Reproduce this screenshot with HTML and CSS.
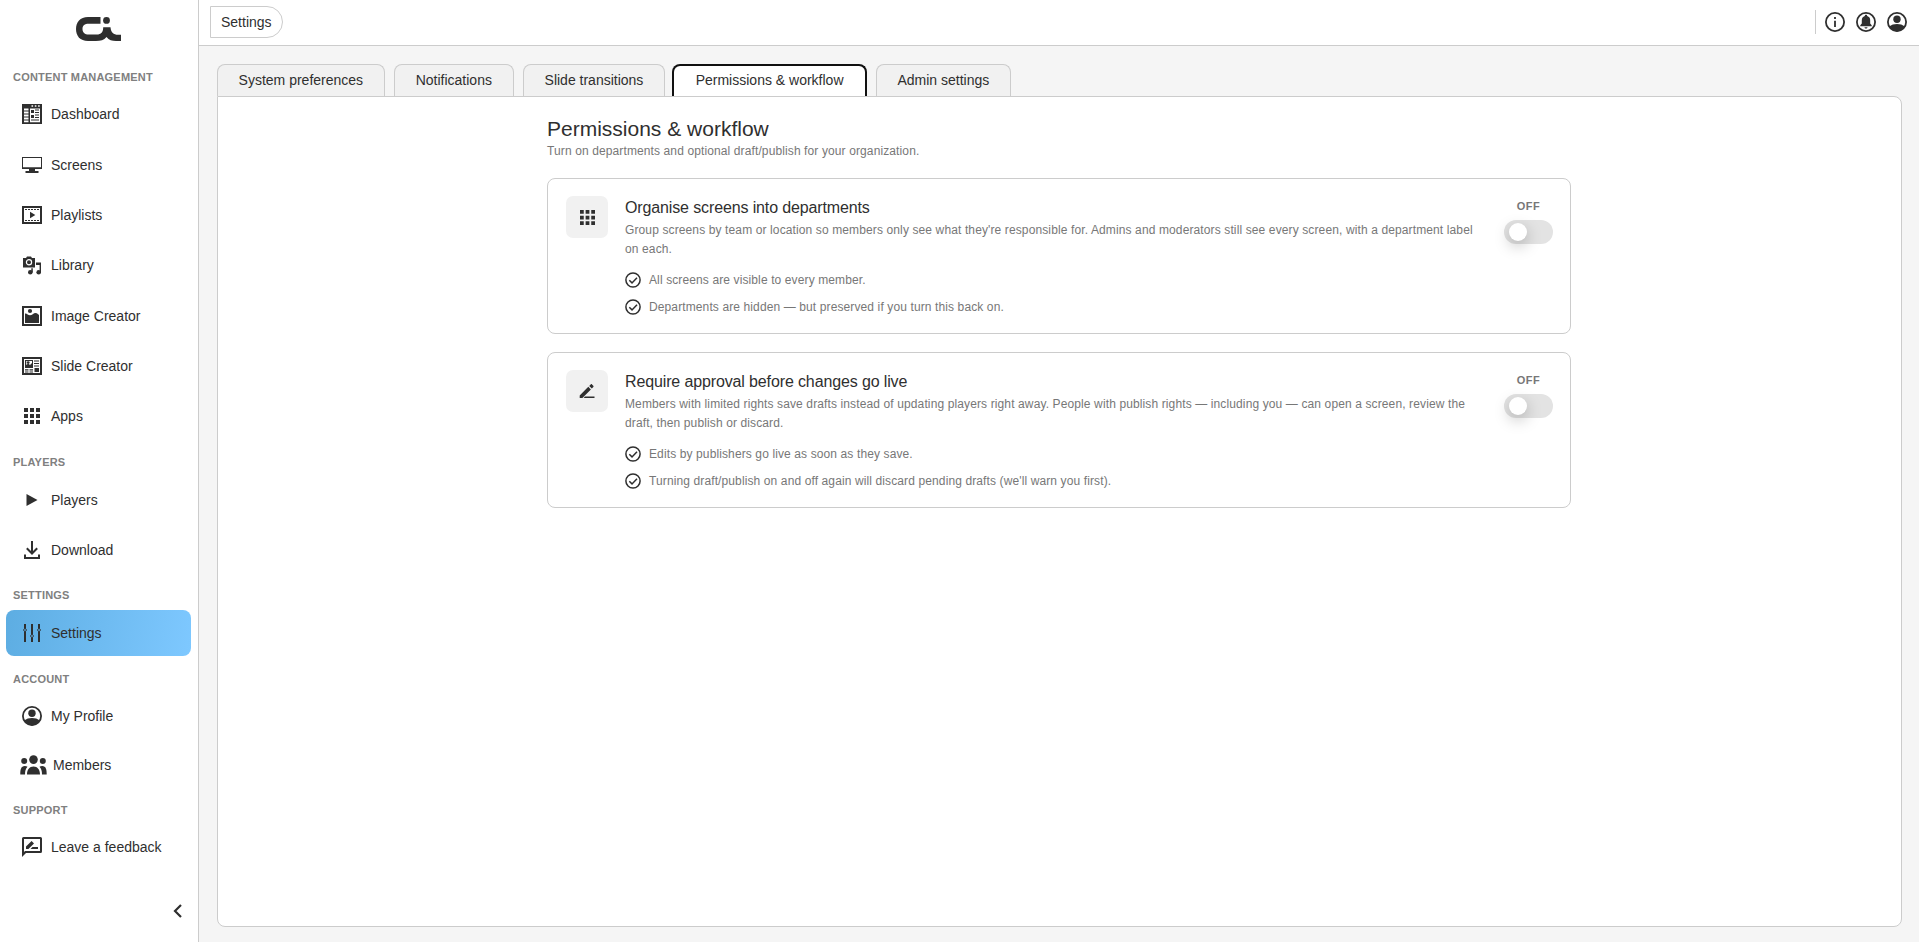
FILE: index.html
```html
<!DOCTYPE html>
<html lang="en">
<head>
    <meta charset="UTF-8">
    <meta name="viewport" content="width=device-width, initial-scale=1.0">
    <title>Settings</title>
    <link rel="stylesheet" href="styles.css">
</head>
<body>
    <!-- shared icons -->
    <svg class="sprite" width="0" height="0">
        <symbol id="grid" viewBox="0 0 16 16"><path d="M0 0h4v4H0zM6 0h4v4H6zM12 0h4v4h-4zM0 6h4v4H0zM6 6h4v4H6zM12 6h4v4h-4zM0 12h4v4H0zM6 12h4v4H6zM12 12h4v4h-4z"/></symbol>
        <symbol id="account" viewBox="0 0 20 20">
            <circle cx="10" cy="10" r="9.1" fill="none" stroke="currentColor" stroke-width="1.8"/>
            <circle cx="10" cy="7.3" r="3.7"/>
            <path d="M2.3 14.6C4.2 12.8 7 12 10 12s5.8.8 7.7 2.6A9.2 9.2 0 0 1 10 19.5 9.2 9.2 0 0 1 2.3 14.6z"/>
        </symbol>
        <symbol id="check" viewBox="0 0 16 16">
            <circle cx="8" cy="8" r="7.1" fill="none" stroke="currentColor" stroke-width="1.5"/>
            <path d="M4.3 8.2l2.7 2.7 5-5.2" fill="none" stroke="currentColor" stroke-width="1.5"/>
        </symbol>
    </svg>

    <div class="app">
        <aside class="sidebar">
            <div class="logo">
                <svg width="46" height="25" viewBox="0 0 46 25">
                    <path d="M24.5 0H12C4 0 0 5 0 12s4 12 12 12h8c4.5 0 8-1 10.500-4C33 23 36 24 40 24h5v-6.300h-3c-4.500 0-7-2-7.500-7.500h-7.300c0 5-2 7.300-6.500 7.300h-8c-4 0-6.200-2-6.200-5.500s2.200-5.300 6.200-5.300h11.800z"/>
                    <circle cx="30.500" cy="3.400" r="3.400"/>
                </svg>
            </div>

            <nav class="menu">
                <h6 class="menu-title">Content management</h6>
                <a class="menu-item">
                    <span class="menu-icon"><svg width="20" height="20" viewBox="0 0 20 20">
                        <path fill-rule="evenodd" d="M0 0h20v20H0zM2 4.5v2h4.500v-2zM2 7.5v2h4.500v-2zM2 10.5v2h4.500v-2zM2 13.5v2h4.500v-2zM2 16.500v1.800h4.500v-1.800zM8 4.500v13.800h10V4.500zM9.500 1.200v1.500h1.600V1.200zM12.800 1.200v1.500h1.600V1.200zM16.100 1.200v1.500h1.600V1.200z"/>
                        <path d="M9 6h3v3H9zM9 11h3v3H9zM13 5.500h4v1h-4zM13 8h4v1h-4zM13 10.500h4v1h-4zM13 13h4v1h-4zM9 15.500h8v1H9z"/>
                    </svg></span>
                    Dashboard
                </a>
                <a class="menu-item">
                    <span class="menu-icon"><svg width="20" height="16" viewBox="0 0 20 16">
                        <path fill-rule="evenodd" d="M0 0h20v12h-7v2h3.500v2h-13v-2H7v-2H0zM1 1v9.300h18V1z"/>
                    </svg></span>
                    Screens
                </a>
                <a class="menu-item">
                    <span class="menu-icon"><svg width="20" height="18" viewBox="0 0 20 18">
                        <path d="M1 1h18v16H1z" fill="none" stroke="currentColor" stroke-width="2"/>
                        <path d="M3 3.500h14M3 14.500h14" stroke="currentColor" stroke-width="1" stroke-dasharray="2 1"/>
                        <path d="M8 5.700v6.600L13.300 9z"/>
                    </svg></span>
                    Playlists
                </a>
                <a class="menu-item">
                    <span class="menu-icon"><svg width="20" height="19" viewBox="0 0 20 19">
                        <path d="M1 2h3l1-1.500h4L10 2h3v9.500H1z"/>
                        <circle cx="7" cy="6.300" r="2.600" fill="none" stroke="#fff" stroke-width="1.200"/>
                        <path d="M14 6.500h5v10h-1.400V9H14z"/>
                        <path d="M9.300 12.300h1.500v4H9.300z"/>
                        <circle cx="8.300" cy="16.200" r="2.300"/>
                        <circle cx="16.700" cy="16.200" r="2.300"/>
                    </svg></span>
                    Library
                </a>
                <a class="menu-item">
                    <span class="menu-icon"><svg width="20" height="20" viewBox="0 0 20 20">
                        <path d="M1 1h18v18H1z" fill="none" stroke="currentColor" stroke-width="2"/>
                        <circle cx="8" cy="5" r="2.100"/>
                        <path d="M3 7.500c2-.3 3 1.800 5 1.800S11.500 7 13.500 7s2.300 1.500 3.500 1.800V17H3z"/>
                    </svg></span>
                    Image Creator
                </a>
                <a class="menu-item">
                    <span class="menu-icon"><svg width="20" height="18" viewBox="0 0 20 18">
                        <path d="M1 1h18v16H1z" fill="none" stroke="currentColor" stroke-width="2"/>
                        <path fill-rule="evenodd" d="M3 3h8v8H3zM4.200 4v4l2-1.500L8 8l2-2V4z"/>
                        <circle cx="6.200" cy="5.600" r="1.400"/>
                        <path d="M12 3.500h5v1h-5zM12 6h5v1h-5zM12 8.500h5v1h-5zM3 12.200h3.500v1.200H3zM7.500 12.200H11v1.200H7.500zM3 14.400h3.500v1H3zM7.500 14.400H11v1H7.500zM12.500 11H17v4h-4.500z"/>
                    </svg></span>
                    Slide Creator
                </a>
                <a class="menu-item">
                    <span class="menu-icon"><svg width="16" height="16"><use href="#grid"/></svg></span>
                    Apps
                </a>

                <h6 class="menu-title">Players</h6>
                <a class="menu-item">
                    <span class="menu-icon"><svg width="12" height="12" viewBox="0 0 12 12"><path d="M.5 0v12L11.500 6z"/></svg></span>
                    Players
                </a>
                <a class="menu-item">
                    <span class="menu-icon"><svg width="16" height="18" viewBox="0 0 16 18">
                        <path d="M8 0v12M2.800 7.300L8 12.500l5.200-5.200M1 13.500V17h14v-3.500" fill="none" stroke="currentColor" stroke-width="2"/>
                    </svg></span>
                    Download
                </a>

                <h6 class="menu-title">Settings</h6>
                <a class="menu-item active">
                    <span class="menu-icon"><svg width="20" height="18" viewBox="0 0 20 18">
                        <path d="M3 0v4M3 8v10M10 0v10M10 14v4M17 0v4M17 8v10" fill="none" stroke="currentColor" stroke-width="2"/>
                        <path d="M3 4l1.500 2L3 8 1.500 6zM10 10l1.500 2-1.500 2-1.500-2zM17 4l1.500 2L17 8l-1.500-2z" fill="none" stroke="currentColor" stroke-width="1"/>
                    </svg></span>
                    Settings
                </a>

                <h6 class="menu-title">Account</h6>
                <a class="menu-item">
                    <span class="menu-icon"><svg width="20" height="20"><use href="#account"/></svg></span>
                    My Profile
                </a>
                <a class="menu-item members">
                    <span class="menu-icon"><svg width="27" height="20" viewBox="0 0 27 20">
                        <circle cx="13.500" cy="4.600" r="4.300"/>
                        <circle cx="4.200" cy="6" r="3"/>
                        <circle cx="22.800" cy="6" r="3"/>
                        <path d="M7 19.500c0-5 2.500-8 6.500-8s6.500 3 6.500 8zM.3 19.500c0-5 .7-8.500 4.500-8.500 1.200 0 2 .3 2.700.8C5.700 13.800 5 16 5 19.500zM26.700 19.500c0-5-.7-8.500-4.500-8.500-1.200 0-2 .3-2.700.8 1.800 2 2.500 4.200 2.500 7.700z"/>
                    </svg></span>
                    Members
                </a>

                <h6 class="menu-title">Support</h6>
                <a class="menu-item">
                    <span class="menu-icon"><svg width="20" height="20" viewBox="0 0 20 20">
                        <path fill-rule="evenodd" d="M1.500 0h17A1.500 1.500 0 0 1 20 1.500v13a1.500 1.500 0 0 1-1.500 1.500H4l-4 4V1.500A1.500 1.500 0 0 1 1.500 0zM2 2v13l1-1h15V2z"/>
                        <path d="M4 12V9.600l5.600-5.600L12 6.400 6.400 12zM10.500 10H16v2H8.500z"/>
                    </svg></span>
                    Leave a feedback
                </a>
            </nav>

            <div class="collapse">
                <svg width="10" height="14" viewBox="0 0 10 14"><path d="M8 1L2 7l6 6" fill="none" stroke="currentColor" stroke-width="2.200"/></svg>
            </div>
        </aside>

        <main class="main">
            <header class="topbar">
                <div class="crumb">Settings</div>
                <div class="actions">
                    <svg width="20" height="20" viewBox="0 0 20 20">
                        <circle cx="10" cy="10" r="9.100" fill="none" stroke="currentColor" stroke-width="1.800"/>
                        <path d="M9.100 5h1.800v2H9.100zM9.100 8.800h1.800V15H9.100z"/>
                    </svg>
                    <svg width="20" height="20" viewBox="0 0 20 20">
                        <circle cx="10" cy="10" r="9.100" fill="none" stroke="currentColor" stroke-width="1.800"/>
                        <path d="M10 2.800c.8 0 1.200.5 1.200 1.200 2 .6 3 2.200 3 4.300v3.200l1.500 1.700v1.100H4.300v-1.100l1.500-1.700V8.300c0-2.100 1-3.700 3-4.300 0-.7.400-1.200 1.200-1.200zM8.500 15.200h3c0 .8-.7 1.400-1.500 1.400s-1.500-.6-1.500-1.400z"/>
                    </svg>
                    <svg width="20" height="20"><use href="#account"/></svg>
                </div>
            </header>

            <div class="content">
                <div class="tabs">
                    <div class="tab">System preferences</div>
                    <div class="tab">Notifications</div>
                    <div class="tab">Slide transitions</div>
                    <div class="tab active">Permissions &amp; workflow</div>
                    <div class="tab">Admin settings</div>
                </div>
                <div class="panel">
                    <div class="panel-inner">
                        <h2>Permissions &amp; workflow</h2>
                        <p class="subtitle">Turn on departments and optional draft/publish for your organization.</p>

                        <div class="card">
                            <div class="card-icon"><svg width="15" height="15"><use href="#grid"/></svg></div>
                            <div class="card-body">
                                <h3>Organise screens into departments</h3>
                                <p>Group screens by team or location so members only see what they're responsible for. Admins and moderators still see every screen, with a department label on each.</p>
                                <ul>
                                    <li><svg width="16" height="16"><use href="#check"/></svg>All screens are visible to every member.</li>
                                    <li><svg width="16" height="16"><use href="#check"/></svg>Departments are hidden — but preserved if you turn this back on.</li>
                                </ul>
                            </div>
                            <div class="card-toggle">
                                <span>OFF</span>
                                <div class="switch"><div class="knob"></div></div>
                            </div>
                        </div>

                        <div class="card">
                            <div class="card-icon"><svg width="16" height="16" viewBox="0 0 16 16">
                                <path d="M.7 15v-2.600l8.600-8.600 2.600 2.600L3.400 15zM10.200 2.900l1.500-1.500c.4-.4.900-.4 1.300 0l1.300 1.300c.4.4.4.900 0 1.300l-1.500 1.500zM6 13.600h9.500V15H4.600z"/>
                            </svg></div>
                            <div class="card-body">
                                <h3>Require approval before changes go live</h3>
                                <p>Members with limited rights save drafts instead of updating players right away. People with publish rights — including you — can open a screen, review the draft, then publish or discard.</p>
                                <ul>
                                    <li><svg width="16" height="16"><use href="#check"/></svg>Edits by publishers go live as soon as they save.</li>
                                    <li><svg width="16" height="16"><use href="#check"/></svg>Turning draft/publish on and off again will discard pending drafts (we'll warn you first).</li>
                                </ul>
                            </div>
                            <div class="card-toggle">
                                <span>OFF</span>
                                <div class="switch"><div class="knob"></div></div>
                            </div>
                        </div>
                    </div>
                </div>
            </div>
        </main>
    </div>
</body>
</html>
```

FILE: styles.css
```css
* { box-sizing: border-box; margin: 0; padding: 0; }
body { font-family: "Liberation Sans", Arial, sans-serif; font-size: 14px; color: #2f2f2f; background: #f5f5f5; }
svg { display: block; fill: currentColor; flex-shrink: 0; }
.sprite { display: none; }

.app { display: flex; height: 100vh; overflow: hidden; }

/* sidebar */
.sidebar { width: 199px; flex-shrink: 0; background: #fff; border-right: 1px solid #ccc; display: flex; flex-direction: column; }
.logo { height: 58.8px; padding: 17px 0 0 76px; }
.menu { padding: 0 7px 0 6px; flex: 1; }
.menu-title { height: 33px; padding: 12px 0 0 7px; font-size: 11px; line-height: 13px; letter-spacing: 0.2px; color: #808080; text-transform: uppercase; }
.menu-item { display: flex; align-items: center; height: 45.3px; margin-bottom: 5px; padding-left: 16px; gap: 9px; border-radius: 8px; }
.menu-item.active { background: linear-gradient(100deg, #5dade2, #7ec8ff); }
.menu-item.members { height: 42.5px; padding-left: 14px; gap: 6px; }
.menu-icon { width: 20px; display: flex; justify-content: center; }
.members .menu-icon { width: 27px; }
.collapse { height: 38px; padding-left: 173px; }

/* top bar */
.main { flex: 1; display: flex; flex-direction: column; min-width: 0; }
.topbar { height: 46px; background: #fff; border-bottom: 1px solid #ccc; display: flex; justify-content: space-between; align-items: flex-start; padding: 6px 12px 0 11px; }
.crumb { height: 32px; line-height: 31px; padding: 0 10px; border: 1px solid #ccc; border-radius: 0 16px 16px 0; }
.actions { display: flex; align-items: center; gap: 11px; height: 24px; margin-top: 4px; padding-left: 9px; border-left: 1px solid #ccc; }

/* tabs */
.content { flex: 1; display: flex; flex-direction: column; padding: 18px 17px 15px 18px; }
.tabs { display: flex; gap: 9px; }
.tab { height: 32px; line-height: 31px; padding: 0 21px 0 20.6px; border: 1px solid #ccc; border-bottom: none; border-radius: 8px 8px 0 0; background: #f1f1f1; }
.tab.active { background: #fff; border: 2px solid #111; border-bottom: none; line-height: 29px; padding: 0 21.3px; margin: 0 0 0 -2px; }
.panel { flex: 1; background: #fff; border: 1px solid #ccc; border-radius: 0 8px 8px 8px; padding-right: 1px; }
.panel-inner { width: 1024px; margin: 0 auto; padding-top: 19px; }

h2 { font-size: 21px; line-height: 26px; font-weight: normal; }
.subtitle { font-size: 12px; line-height: 18px; letter-spacing: 0.115px; color: #777; margin-bottom: 18px; }

/* cards */
.card { display: flex; height: 156px; margin-bottom: 18px; padding: 17px 17px 17px 18px; border: 1px solid #ccc; border-radius: 8px; }
.card-icon { width: 42px; height: 42px; flex-shrink: 0; margin-right: 17px; border-radius: 7px; background: #f1f1f1; display: flex; align-items: center; justify-content: center; }
.card-body { flex: 1; margin-right: 18px; }
.card-body h3 { font-size: 16px; line-height: 24px; font-weight: normal; letter-spacing: -0.13px; margin-bottom: 1px; }
.card-body p { font-size: 12px; line-height: 19px; letter-spacing: 0.12px; color: #777; }
.card-body ul { list-style: none; margin-top: 12px; }
.card-body li { display: flex; align-items: center; gap: 8px; height: 18px; margin-bottom: 9px; font-size: 12px; letter-spacing: 0.115px; color: #777; }
.card-body li svg { color: #2f2f2f; }
.card-toggle { width: 49px; text-align: center; }
.card-toggle span { display: block; padding-top: 4px; font-size: 11px; line-height: 13px; font-weight: bold; letter-spacing: 0.5px; color: #777; }
.switch { width: 49px; height: 24px; margin-top: 7px; padding: 3px 5px; border-radius: 12px; background: #e3e3e3; }
.knob { width: 18px; height: 18px; border-radius: 50%; background: #fff; box-shadow: 0 5px 15px rgba(0, 0, 0, 0.25); }
```
